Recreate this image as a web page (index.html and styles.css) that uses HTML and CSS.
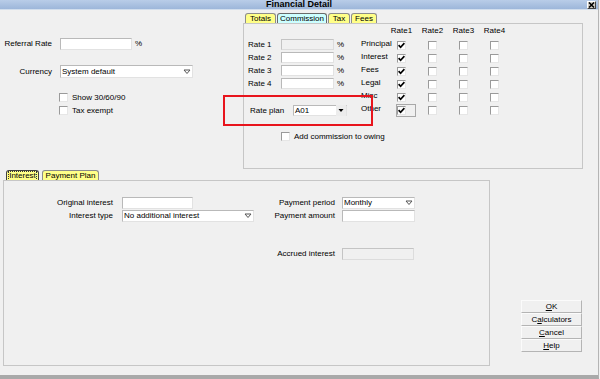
FILE: index.html
```html
<!DOCTYPE html>
<html lang="en">
<head>
    <meta charset="UTF-8">
    <title>Financial Detail</title>
    <link rel="stylesheet" href="styles.css">
</head>
<body>
    <svg class="defs" width="0" height="0">
        <symbol id="chk" viewBox="0 0 7 7">
            <path d="M0.6 3.2 2.6 5.3 6.4 1.2" fill="none" stroke="#000" stroke-width="1.7"/>
        </symbol>
        <symbol id="drop" viewBox="0 0 10 11">
            <polygon points="2,4 8,4 5,7.5" fill="#fff" stroke="#555" stroke-width="1"/>
        </symbol>
        <symbol id="dropfill" viewBox="0 0 10 11">
            <polygon points="2.5,4 7.5,4 5,7" fill="#000"/>
        </symbol>
    </svg>

    <div class="dialog">
        <div class="titlebar">
            <span></span>
            <span class="title">Financial Detail</span>
            <span class="close">
                <svg width="7" height="6" viewBox="0 0 7 6"><path d="M1 0.5 6 5.5M6 0.5 1 5.5" stroke="#000" stroke-width="1.5"/></svg>
            </span>
        </div>

        <div class="top">
            <!-- general fields -->
            <div class="left-form">
                <div class="field-row">
                    <span class="lbl">Referral Rate</span>
                    <span class="input w-referral"></span>
                    <span class="pct">%</span>
                </div>
                <div class="field-row currency">
                    <span class="lbl">Currency</span>
                    <span class="select w-currency">
                        <span class="sel-text">System default</span>
                        <span class="arrow"><svg width="10" height="11"><use href="#drop"/></svg></span>
                    </span>
                </div>
                <div class="check-list">
                    <div class="check-row"><span class="cb"></span><span class="cb-text">Show 30/60/90</span></div>
                    <div class="check-row"><span class="cb"></span><span class="cb-text">Tax exempt</span></div>
                </div>
            </div>

            <!-- commission tabs -->
            <div class="tabset commission">
                <div class="tabs">
                    <span class="tab t-totals">Totals</span>
                    <span class="tab tab-active t-comm">Commission</span>
                    <span class="tab t-tax">Tax</span>
                    <span class="tab t-fees">Fees</span>
                </div>
                <div class="panel">
                    <div class="panel-main">
                        <div class="rates">
                            <div class="rate-row"><span class="rate-lbl">Rate 1</span><span class="input w-rate disabled"></span><span class="pct">%</span></div>
                            <div class="rate-row"><span class="rate-lbl">Rate 2</span><span class="input w-rate"></span><span class="pct">%</span></div>
                            <div class="rate-row"><span class="rate-lbl">Rate 3</span><span class="input w-rate"></span><span class="pct">%</span></div>
                            <div class="rate-row"><span class="rate-lbl">Rate 4</span><span class="input w-rate"></span><span class="pct">%</span></div>
                            <div class="plan-row">
                                <span class="plan-lbl">Rate plan</span>
                                <span class="select w-plan">
                                    <span class="sel-text">A01</span>
                                    <span class="arrow arrow-btn"><svg width="10" height="11"><use href="#dropfill"/></svg></span>
                                </span>
                            </div>
                        </div>
                        <div class="rate-grid">
                            <span></span>
                            <span class="hd">Rate1</span>
                            <span class="hd">Rate2</span>
                            <span class="hd">Rate3</span>
                            <span class="hd">Rate4</span>

                            <span class="rl">Principal</span>
                            <span class="cell"><span class="cb"><svg width="7" height="7"><use href="#chk"/></svg></span></span>
                            <span class="cell"><span class="cb"></span></span>
                            <span class="cell"><span class="cb"></span></span>
                            <span class="cell"><span class="cb"></span></span>

                            <span class="rl">Interest</span>
                            <span class="cell"><span class="cb"><svg width="7" height="7"><use href="#chk"/></svg></span></span>
                            <span class="cell"><span class="cb"></span></span>
                            <span class="cell"><span class="cb"></span></span>
                            <span class="cell"><span class="cb"></span></span>

                            <span class="rl">Fees</span>
                            <span class="cell"><span class="cb"><svg width="7" height="7"><use href="#chk"/></svg></span></span>
                            <span class="cell"><span class="cb"></span></span>
                            <span class="cell"><span class="cb"></span></span>
                            <span class="cell"><span class="cb"></span></span>

                            <span class="rl">Legal</span>
                            <span class="cell"><span class="cb"><svg width="7" height="7"><use href="#chk"/></svg></span></span>
                            <span class="cell"><span class="cb"></span></span>
                            <span class="cell"><span class="cb"></span></span>
                            <span class="cell"><span class="cb"></span></span>

                            <span class="rl">Misc</span>
                            <span class="cell"><span class="cb"><svg width="7" height="7"><use href="#chk"/></svg></span></span>
                            <span class="cell"><span class="cb"></span></span>
                            <span class="cell"><span class="cb"></span></span>
                            <span class="cell"><span class="cb"></span></span>

                            <span class="rl">Other</span>
                            <span class="cell"><span class="cb focus"><svg width="7" height="7"><use href="#chk"/></svg></span></span>
                            <span class="cell"><span class="cb"></span></span>
                            <span class="cell"><span class="cb"></span></span>
                            <span class="cell"><span class="cb"></span></span>
                        </div>
                    </div>
                    <div class="check-row add-comm"><span class="cb"></span><span class="cb-text">Add commission to owing</span></div>
                </div>
            </div>
        </div>

        <div class="bottom">
            <!-- interest tabs -->
            <div class="tabset interest">
                <div class="tabs">
                    <span class="tab tab-focus t-int"><span class="focus-text">Interest</span></span>
                    <span class="tab t-plan">Payment Plan</span>
                </div>
                <div class="panel">
                    <div class="int-grid">
                        <span class="g-lbl">Original interest</span>
                        <span class="g-field"><span class="input w-orig"></span></span>
                        <span class="g-lbl">Payment period</span>
                        <span class="g-field r">
                            <span class="select w-period">
                                <span class="sel-text">Monthly</span>
                                <span class="arrow"><svg width="10" height="11"><use href="#drop"/></svg></span>
                            </span>
                        </span>

                        <span class="g-lbl">Interest type</span>
                        <span class="g-field">
                            <span class="select w-type">
                                <span class="sel-text">No additional interest</span>
                                <span class="arrow"><svg width="10" height="11"><use href="#drop"/></svg></span>
                            </span>
                        </span>
                        <span class="g-lbl">Payment amount</span>
                        <span class="g-field r"><span class="input w-amount"></span></span>

                        <span class="g-lbl accrued">Accrued interest</span>
                        <span class="g-field r accrued-field"><span class="input w-accrued disabled"></span></span>
                    </div>
                </div>
            </div>

            <div class="buttons">
                <span class="btn"><u>O</u>K</span>
                <span class="btn">C<u>a</u>lculators</span>
                <span class="btn"><u>C</u>ancel</span>
                <span class="btn"><u>H</u>elp</span>
            </div>
        </div>

        <div class="highlight"></div>
    </div>
</body>
</html>
```

FILE: styles.css
```css
/*reset*/
* {
    padding: 0;
    margin: 0;
    box-sizing: border-box;
}

/*default*/
body {
    font: 8px/1 "Liberation Sans", Arial, sans-serif;
    color: #000;
    background-color: #f0f0f0;
}
.defs {
    position: absolute;
    width: 0;
    height: 0;
}

/*dialog*/
.dialog {
    position: relative;
    width: 599px;
    height: 379px;
    display: flex;
    flex-direction: column;
    background-color: #f0f0f0;
    border-right: 1px solid #b4b4b4;
    border-bottom: 4px solid #a9a9a9;
}
.titlebar {
    height: 10px;
    display: grid;
    grid-template-columns: 1fr auto 1fr;
    align-items: center;
    background: linear-gradient(#b9cde8, #9db6da);
    border-bottom: 1px solid #d2deed;
}
.title {
    font-size: 9px;
    line-height: 9px;
    font-weight: bold;
}
.close {
    justify-self: end;
    margin-right: 2px;
    width: 9px;
    height: 8px;
    display: flex;
    align-items: center;
    justify-content: center;
    background-color: #d4d0c8;
    border: 1px solid;
    border-color: #fff #404040 #404040 #fff;
}

/*controls*/
.input {
    display: block;
    background-color: #fff;
    border: 1px solid;
    border-color: #b9b9b9 #e2e2e2 #e2e2e2 #b9b9b9;
}
.input.disabled {
    background-color: #f0f0f0;
    border-color: #c4c4c4 #dcdcdc #dcdcdc #c4c4c4;
}
.select {
    display: flex;
    align-items: center;
    background-color: #fff;
    border: 1px solid;
    border-color: #b9b9b9 #e2e2e2 #e2e2e2 #b9b9b9;
}
.sel-text {
    flex: 1;
    padding-left: 1px;
    white-space: nowrap;
}
.arrow {
    width: 10px;
    height: 11px;
    display: flex;
}
.arrow-btn {
    background-color: #ececec;
}
.cb {
    position: relative;
    width: 9px;
    height: 9px;
    flex: none;
    display: flex;
    align-items: center;
    justify-content: center;
    background-color: #fff;
    border: 1px solid;
    border-color: #9a9a9a #e6e6e6 #e6e6e6 #9a9a9a;
}
.cb.focus::after {
    content: "";
    position: absolute;
    left: -2px;
    top: -3px;
    width: 18px;
    height: 11px;
    border: 1px solid #a8a8a8;
}
.check-row {
    height: 13px;
    display: flex;
    align-items: center;
}
.cb-text {
    margin-left: 4px;
    white-space: nowrap;
}
.pct {
    margin-left: 3px;
}

/*tabs*/
.tabset {
    display: flex;
    flex-direction: column;
}
.tabs {
    height: 10px;
    display: flex;
    gap: 1px;
    align-items: flex-end;
}
.tab {
    height: 10px;
    line-height: 9px;
    text-align: center;
    white-space: nowrap;
    background-color: #ffff88;
    border: 1px solid #8c8c8c;
    border-bottom: none;
    border-radius: 3px 3px 0 0;
}
.tab-active {
    background-color: #ccffff;
    border-color: #6a6a6a;
}
.tab-focus {
    border-color: #404040;
    display: flex;
    align-items: center;
    justify-content: center;
}
.focus-text {
    line-height: 8px;
    outline: 1px dotted #333;
}
.panel {
    flex: 1;
    border: 1px solid #c6c6c6;
}

/*top area*/
.top {
    height: 159px;
    display: flex;
}
.left-form {
    width: 243px;
    padding-top: 28px;
}
.field-row {
    height: 12px;
    display: flex;
    align-items: center;
}
.field-row.currency {
    height: 13px;
    margin-top: 15px;
}
.lbl {
    width: 52px;
    margin-right: 8px;
    text-align: right;
    white-space: nowrap;
}
.w-referral {
    width: 72px;
    height: 12px;
}
.w-currency {
    width: 133px;
    height: 13px;
}
.check-list {
    margin: 13px 0 0 59px;
}

.commission {
    width: 340px;
    margin-top: 3px;
}
.commission .tabs {
    padding-left: 2px;
}
.t-totals { width: 31px; }
.t-comm { width: 50px; }
.t-tax { width: 22px; }
.t-fees { width: 26px; }

.panel-main {
    display: flex;
}
.rates {
    width: 117px;
    padding: 15px 0 0 4px;
}
.rate-row {
    height: 13px;
    display: flex;
    align-items: flex-start;
    line-height: 11px;
}
.rate-lbl {
    width: 33px;
}
.w-rate {
    width: 53px;
    height: 11px;
}
.plan-row {
    margin-top: 14px;
    padding-left: 2px;
    display: flex;
    align-items: center;
}
.plan-lbl {
    width: 43px;
}
.w-plan {
    width: 54px;
    height: 11px;
}
.rate-grid {
    padding-top: 1px;
    display: grid;
    grid-template-columns: 25px repeat(4, 31px);
    grid-template-rows: 14px repeat(6, 13px);
}
.hd {
    line-height: 12px;
    text-align: center;
}
.rl {
    line-height: 10px;
    white-space: nowrap;
}
.cell {
    display: flex;
    align-items: center;
    justify-content: center;
}
.add-comm {
    margin-top: 13px;
    padding-left: 37px;
}

/*bottom area*/
.bottom {
    flex: 1;
    display: flex;
    padding-top: 1px;
}
.interest {
    width: 487px;
    height: 196px;
    margin-left: 3px;
}
.interest .tabs {
    padding-left: 3px;
    gap: 3px;
}
.t-int { width: 33px; }
.t-plan { width: 57px; }

.int-grid {
    padding-top: 15px;
    display: grid;
    grid-template-columns: 109px 141px 81px 80px;
    grid-template-rows: 13px 13px 25px 13px;
}
.g-lbl {
    align-self: center;
    text-align: right;
    white-space: nowrap;
}
.g-field {
    padding-left: 9px;
    display: flex;
    align-items: center;
}
.g-field.r {
    padding-left: 7px;
}
.accrued {
    grid-row: 4;
    grid-column: 3;
}
.accrued-field {
    grid-row: 4;
    grid-column: 4;
}
.w-orig {
    width: 71px;
    height: 12px;
}
.w-type {
    width: 132px;
    height: 12px;
}
.w-period {
    width: 73px;
    height: 12px;
}
.w-amount {
    width: 73px;
    height: 12px;
}
.w-accrued {
    width: 72px;
    height: 12px;
}

.buttons {
    width: 61px;
    margin: 130px 0 0 31px;
    display: flex;
    flex-direction: column;
}
.btn {
    height: 13px;
    line-height: 11px;
    text-align: center;
    background-color: #f0f0f0;
    border: 1px solid;
    border-color: #fbfbfb #b4b4b4 #b4b4b4 #fbfbfb;
}

/*annotation*/
.highlight {
    position: absolute;
    left: 223px;
    top: 95px;
    width: 150px;
    height: 31px;
    border: 2px solid #e8141c;
}
```
